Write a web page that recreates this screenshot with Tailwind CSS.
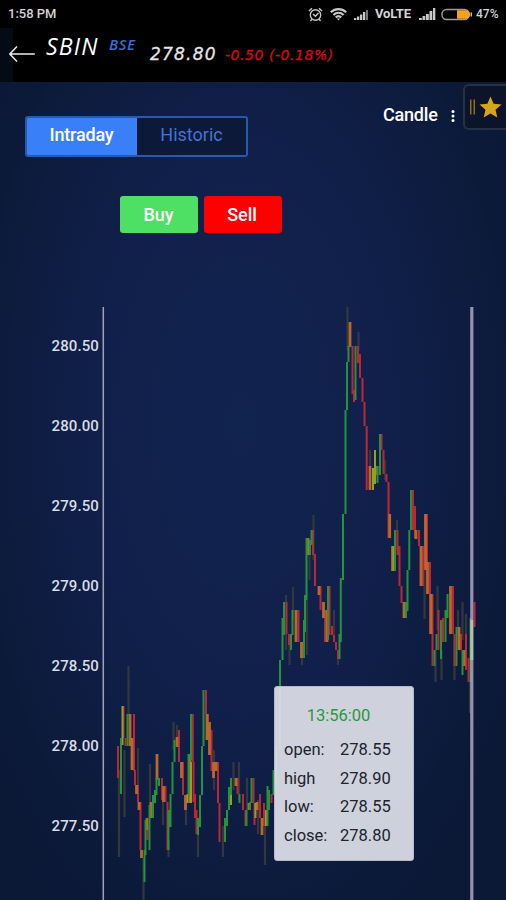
<!DOCTYPE html>
<html lang="en">
<head>
  <meta charset="UTF-8" />
  <meta name="viewport" content="width=device-width, initial-scale=1.0" />
  <title>SBIN – Intraday Chart</title>
  <script src="https://cdn.jsdelivr.net/npm/@tailwindcss/browser@4"></script>
</head>
<body class="bg-[#0b1837] font-['Roboto',sans-serif] text-white">
<div class="w-[506px] h-[900px] overflow-hidden flex flex-col">

  <!-- Status bar -->
  <div class="h-7 shrink-0 bg-black flex items-center pl-2 pr-[6px] text-[12.5px] font-medium text-[#d4d4d4]">
    <span class="text-[13px]">1:58 PM</span>
    <svg class="ml-auto" width="15" height="15" viewBox="0 0 15 15" fill="none" stroke="#c8c8c8" stroke-width="1.4">
      <circle cx="7.5" cy="8" r="5.2" />
      <path d="M1 4 4 1.2M14 4 11 1.2M3.8 12.2 2.5 14M11.2 12.2 12.5 14M5 7l2.4 2.2L10.5 6" />
    </svg>
    <svg class="ml-[7px]" width="17" height="13" viewBox="0 0 17 13" fill="none" stroke="#c8c8c8" stroke-width="2.200">
      <path d="M.8 4.3c4.5-4.2 10.900-4.200 15.400 0M3.400 7c3-2.800 7.200-2.800 10.200 0M5.800 9.400c1.600-1.500 3.800-1.500 5.400 0" />
      <path d="M6.800 10.500h3.400l-1.700 2z" fill="#c8c8c8" stroke="none" />
    </svg>
    <svg class="ml-[7px]" width="16" height="11" viewBox="0 0 16 11" fill="#c8c8c8">
      <path d="M0 9h2.300v2H0zM3 7.500h2.300V11H3zM6 5.500h2.300V11H6zM9 3h2.300v8H9z" />
      <path d="M12 1h2v10h-2z" fill="#777" />
    </svg>
    <span class="ml-[5px] w-[37px] text-[13px] font-bold tracking-[-0.1px]">VoLTE</span>
    <svg class="ml-[7px]" width="17" height="12" viewBox="0 0 17 12" fill="#c8c8c8">
      <path d="M0 10h2.800v2H0zM3.500 8h2.800v4H3.500zM7 6h2.800v6H7zM10.500 3h2.800v9h-2.800zM14 0h2.300v12H14z" />
    </svg>
    <svg class="ml-[5px]" width="32" height="13" viewBox="0 0 32 13">
      <rect x="1" y="1.500" width="27" height="10" rx="4.500" fill="#050505" stroke="#9c9c9c" stroke-width="1.400" />
      <path d="M16 2.200h9a4 4 0 0 1 4 4.300 4 4 0 0 1-4 4.300h-9z" fill="#f9a11f" />
      <path d="M29.500 4.500h1.500v4h-1.500z" fill="#bbb" />
    </svg>
    <span class="ml-[3px] w-[24px] text-[12px]">47%</span>
  </div>

  <!-- Stock header -->
  <header class="h-[54px] shrink-0 bg-linear-to-r from-[#050a17] from-[13px] to-black to-[13px] flex items-start pl-2 whitespace-nowrap">
    <svg class="mt-[17px]" width="28" height="18" viewBox="0 0 28 18" fill="none" stroke="#ececec" stroke-width="1.500">
      <path d="M9 1.500 1.800 9 9 16.500M1.800 9h25" />
    </svg>
    <h1 class="ml-[10px] mt-[3px] w-[63px] font-['Open_Sans',sans-serif] italic font-medium text-[23px] leading-[30px] tracking-[1.200px]">SBIN</h1>
    <span class="mt-[7px] w-[41px] font-['Open_Sans',sans-serif] italic font-semibold text-[15px] leading-[18px] tracking-[0.500px] text-[#346fd2]">BSE</span>
    <span class="mt-[15px] w-[75px] font-['DejaVu_Sans',sans-serif] italic text-[17px] leading-[22px] tracking-[1.200px] text-[#e6e6e6] [-webkit-text-stroke:0.300px_#e6e6e6]">278.80</span>
    <span class="mt-[17px] font-['DejaVu_Sans',sans-serif] italic text-[14px] leading-[20px] tracking-[0.550px] text-[#dc0909] [-webkit-text-stroke:0.300px_#dc0909]">-0.50 (-0.18%)</span>
  </header>

  <main class="relative flex-1 min-h-0 flex flex-col bg-[radial-gradient(ellipse_300px_560px_at_48%_42%,#11234f_0%,#10204a_50%,#0b1836_100%)]">

    <!-- Chart controls -->
    <div class="h-[113px] shrink-0 flex items-start">
      <div class="ml-[25px] mt-[34px] w-[223px] shrink-0 h-[41px] flex rounded-[3px] border-2 border-[#2859ad] text-[18px] leading-[34px] text-center overflow-hidden">
        <button class="w-[111px] -ml-px pb-[3px] bg-[#397ff8] font-medium tracking-[-0.2px]">Intraday</button>
        <button class="flex-1 pb-[3px] bg-[#0d1939] text-[#4674ce]">Historic</button>
      </div>
      <span class="ml-[135px] mt-[19px] w-[62px] shrink-0 text-[18px] leading-[27px] font-medium tracking-[-0.2px]">Candle</span>
      <svg class="mt-[27px] ml-[4px] shrink-0" width="8" height="16" viewBox="0 0 8 16" fill="#fff">
        <circle cx="4" cy="2.500" r="1.500" /><circle cx="4" cy="7" r="1.500" /><circle cx="4" cy="11.500" r="1.500" />
      </svg>
      <!-- Favourites tab -->
      <div class="ml-[6px] mt-[2px] w-[43px] h-[46px] shrink-0 rounded-l-md border-2 border-r-0 border-[#273044] bg-[#0b1429] flex items-center">
        <svg class="ml-[3px] shrink-0" width="38" height="24" viewBox="0 0 38 24" fill="#d6a51c">
          <path d="M2 4.500h1.500v15H2zM5.500 4.500H7v15H5.500z" fill="#906e1b" />
          <path d="M22.500 1.500l3.100 7.300 7.900.7-6 5.200 1.800 7.800-6.800-4.100-6.800 4.100 1.800-7.800-6-5.200 7.900-.7z" />
        </svg>
      </div>
    </div>

    <div class="h-[111px] shrink-0 flex items-start gap-[6px] pl-[120px] text-[18px] leading-[35px] text-center font-medium">
      <button class="w-[78px] h-[37px] pr-px rounded-[3px] bg-[#4de064] mt-[0.5px]">Buy</button>
      <button class="w-[78px] h-[37px] pr-[2px] rounded-[3px] bg-[#ff0000] mt-[0.5px]">Sell</button>
    </div>

    <!-- Price chart -->
    <div class="flex-1 min-h-0 flex overflow-hidden">
      <div class="w-[99px] shrink-0 text-right text-[15px] font-medium leading-[80px] tracking-[0.100px] text-[#d9dce3]">
        <div>280.50</div>
        <div>280.00</div>
        <div>279.50</div>
        <div>279.00</div>
        <div>278.50</div>
        <div>278.00</div>
        <div>277.50</div>
        <div>277.00</div>
      </div>
      <svg class="shrink-0" width="407" height="594" viewBox="99 306 407 594" fill="none">
        <path d="M103.300 307V900" stroke="#a49fba" stroke-width="1.500" />
        <!-- wicks -->
        <path stroke="#34383c" stroke-width="2.200" d="M119 770V857M128.500 666V720M124.500 750V817M138 748V800M143.500 858V900M150 764V805M163 790V825M168.500 840V857M173.500 722V750M177 725V745M186 800V825M198 830V857M214 750V790M223 826V857M233.500 762V790M239 762V800M247 778V810M258 800V834M265 810V865M286 595V650M289.500 640V665M293 587V620M302 645V665M307 600V655M313.500 515V560M309.500 550V580M334 610V640M338 650V665M347.500 307V350M358.500 332V350M370 450V480M385 460V480M397 520V550M424.500 570V619M435.500 650V682M437.500 586V630M441.500 650V680M454.500 640V680M458 610V635M462.500 602V640M466 614V640M470 680V713" />
        <!-- falling -->
        <path stroke="#bd2638" stroke-width="2" d="M118 746V778M123.500 706V738M125.500 738V746M134 714V771M135 770V785M138 785V802M140.500 802V850M147.500 825V840M162 778V800M165.500 786V802M167.500 802V850M179 730V762M183 762V795M192.800 714V762M193.500 762V802M195 794V818M196.500 810V834M206 690V714M208 714V730M211.500 730V771M218 762V803M219.500 803V842M237.500 778V794M243 794V810M245.500 810V826M253.500 778V803M254.500 803V825M260 794V818M264 803V826M271.500 794V803M286.500 602V634M289 634V645M298.500 610V642M302.500 642V650M313 530V555M315 554V586M320.500 586V610M325 610V642M329.500 586V635M332 626V635M334 635V642M336 642V650M338 650V659M352.500 346V394M354 390V402M358 346V363M360 354V378M362.500 378V402M364.500 402V426M366.700 426V490M381.500 434V450M383.500 450V474M386.500 474V482M388.500 482V538M397.500 530V555M399.500 546V586M401.500 586V603M413 490V530M415 506V538M419 530V546M423 546V586M427 514V562M430 562V634M432.500 594V666M438.500 610V650M443 618V642M453 586V634M454.500 634V666M461 634V650M466 634V670M468.500 658V682M474.500 602V627" />
        <!-- overlapping bars -->
        <path stroke="#b9682c" stroke-width="2.800" d="M130 714V746M132 738V770M136.500 785V794M139 802V810M141.500 850V858M147 818V830M151 802V818M157 754V780M163.500 786V802M177 737V747M181.500 762V778M185.500 795V810M190 754V803M207 714V740M209.500 722V755M213.500 762V778M216 762V771M236 778V786M249 803V810M257 802V810M262 818V835M296 610V642M301.500 642V658M308 538V555M319 586V595M323.500 602V618M327 610V642M350 322V347M370 466V490M377 466V475M389.700 514V538M392.500 546V571M404 602V618M416 530V539M421 546V586M425.500 514V570M427.500 562V594M431 594V634M450.500 586V634M459 627V650M464 650V666" />
        <path stroke="#93a025" stroke-width="2" d="M122.500 706V745M187.500 794V803M191 762V803M231 780V805M255.500 803V818M266 810V826M373 468V490M375 450V484M393.500 546V571" />
        <!-- rising -->
        <path stroke="#25923c" stroke-width="2" d="M121 738V794M127.500 714V746M144.500 850V882M145.500 820V855M149.500 805V850M153 795V818M155 790V803M156.500 778V795M159 778V786M168.500 810V850M170.500 794V827M172.500 762V794M174.500 740V762M188.500 754V795M191 714V760M198 818V835M200 795V827M202 746V795M203.500 690V746M225 818V842M227 810V826M229 787V810M231 778V795M239.500 794V803M246.500 810V826M250 802V810M251.500 778V803M267.500 786V826M269 790V810M273.500 770V795M276 746V785M280 660V750M282.500 618V660M284 602V635M291 634V650M292.500 610V635M304 620V658M305 595V632M306.500 538V600M310 540V555M311.500 530V545M328 586V640M339.500 634V659M340.800 578V642M343 514V580M345.500 410V514M347 362V410M348.500 346V362M355.500 346V400M377.500 466V483M380 434V475M395 530V571M406 602V618M407.500 570V611M409.300 530V570M411 490V530M434.500 650V666M436.500 634V650M441 620V659M445.500 610V642M447.500 594V618M456.500 627V666M462.500 650V675M470.500 618V682" />
        <!-- crosshair over the last candle -->
        <path d="M471.800 307V900" stroke="#a49fba" stroke-opacity=".9" stroke-width="3.200" />
        <path d="M471.800 620V660" stroke="#a5c8a6" stroke-width="2.800" />
      </svg>
    </div>

    <!-- Candle tooltip -->
    <div class="absolute left-[274px] top-[604px] w-[140px] h-[175px] rounded-[3px] border border-[#b5bac7] bg-[#dee0e8]/93 text-[#20232c] text-[16.500px] pt-[19px] pl-[9px]">
      <div class="w-[109px] leading-[20px] text-center text-[#26993a]">13:56:00</div>
      <div class="mt-[10px] grid grid-cols-[56px_1fr] leading-[28.500px]">
        <span>open:</span><span>278.55</span>
        <span>high</span><span>278.90</span>
        <span>low:</span><span>278.55</span>
        <span>close:</span><span>278.80</span>
      </div>
    </div>
  </main>

</div>
</body>
</html>
